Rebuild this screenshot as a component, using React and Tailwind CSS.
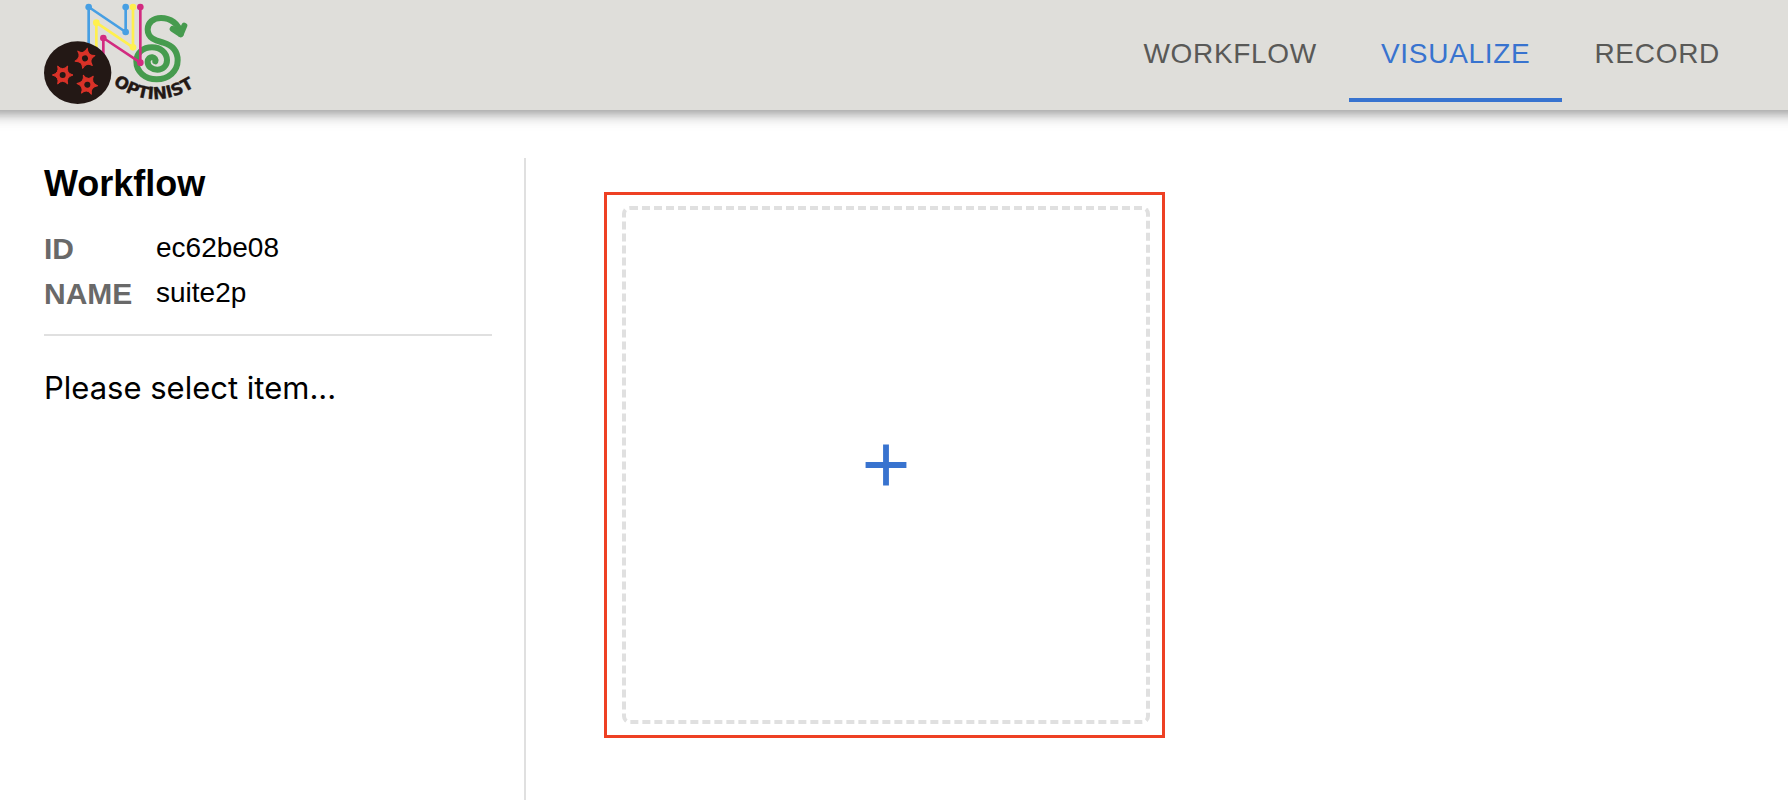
import React from "react";

const GEAR =
  "M31 0 Q9 6 15 27 Q0 11 -15 27 Q-9 6 -31 0 Q-9 -6 -15 -27 Q0 -11 15 -27 Q9 -6 31 0 Z";

function Gear({ x, y, angle }) {
  return (
    <g transform={`translate(${x} ${y}) rotate(${angle})`}>
      <circle r="19" fill="#d93228" />
      <path d={GEAR} fill="#d93228" stroke="#d93228" strokeWidth="3" strokeLinejoin="round" />
      <circle r="9" fill="#231815" />
    </g>
  );
}

function Logo() {
  return (
    <svg viewBox="42 0 456 330" className="h-[110px] w-[152px]" role="img" aria-label="OptiNiSt">
      <g fill="none" stroke="#469b4e" strokeWidth="18" strokeLinecap="round" strokeLinejoin="round">
        <path d="M452 102 C447 70 420 54 393 54 C370 54 353 68 353 88 C353 116 378 122 400 128 C430 137 443 156 443 181 C443 214 415 238 380 238 C345 238 319 215 319 184 C319 158 340 142 366 142 C392 142 411 158 411 181 C411 198 398 209 382 209 C365 209 353 199 353 186 C353 176 360 171 367 172 C374 173 378 179 376 184" />
        <path d="M428 87 L452 103 L463 77" />
      </g>
      <g fill="none" strokeWidth="8" strokeLinejoin="round">
        <path d="M176 145 V21 L287 96 V21" stroke="#479fe3" />
        <path d="M199 150 V68 L309 142 V21" stroke="#fff04f" />
        <path d="M220 170 V114 L331 188 V21" stroke="#d22b80" />
      </g>
      <g fill="#479fe3">
        <circle cx="176" cy="21" r="10" />
        <circle cx="287" cy="21" r="10" />
        <circle cx="287" cy="96" r="10" />
      </g>
      <g fill="#fff04f">
        <circle cx="199" cy="68" r="10" />
        <circle cx="309" cy="21" r="10" />
        <circle cx="309" cy="142" r="10" />
      </g>
      <g fill="#d22b80">
        <circle cx="220" cy="114" r="10" />
        <circle cx="331" cy="21" r="10" />
        <circle cx="331" cy="188" r="10" />
      </g>
      <ellipse cx="143" cy="218" rx="101" ry="94" fill="#231815" />
      <Gear x={165} y={175} angle={-16} />
      <Gear x={98} y={225} angle={0} />
      <Gear x={172} y={254} angle={6} />
      <path id="logo-arc" d="M249 252 Q378 346 514 246" fill="none" />
      <text
        className="font-['DejaVu_Sans',sans-serif] text-[50px] font-bold"
        fill="#231815"
        stroke="#231815"
        strokeWidth="1"
      >
        <textPath href="#logo-arc">OPTINIST</textPath>
      </text>
    </svg>
  );
}

const TABS = ["Workflow", "Visualize", "Record"];

function Header() {
  return (
    <header className="relative -mx-5 flex items-center justify-between bg-[#dfdeda] pr-14 pl-16 shadow-[0_4px_8px_-2px_rgba(0,0,0,0.2),0_8px_10px_rgba(0,0,0,0.14),0_2px_20px_rgba(0,0,0,0.12)]">
      <Logo />
      <nav className="flex pb-0.5" role="tablist">
        {TABS.map((tab) => {
          const active = tab === "Visualize";
          return (
            <button
              key={tab}
              type="button"
              role="tab"
              aria-selected={active}
              className={
                "h-24 border-y-4 border-t-transparent px-8 text-[28px] leading-9 tracking-wide uppercase " +
                (active ? "border-b-[#3873cf] text-[#3873cf]" : "border-b-transparent text-[#595957]")
              }
            >
              {tab}
            </button>
          );
        })}
      </nav>
    </header>
  );
}

function Sidebar() {
  return (
    <aside className="w-[526px] shrink-0 border-r-2 border-[#e0e0e0] pr-8 pl-11">
      <h3 className="pt-1 text-[36px] leading-[44px] font-bold">Workflow</h3>
      <dl className="mt-5 grid grid-cols-[112px_1fr] border-b-2 border-[#e0e0e0] pb-[18px]">
        <dt className="text-[30px] leading-[45px] font-bold text-[#696969]">ID</dt>
        <dd className="text-[28px] leading-[43px]">ec62be08</dd>
        <dt className="text-[30px] leading-[45px] font-bold text-[#696969]">NAME</dt>
        <dd className="text-[28px] leading-[43px]">suite2p</dd>
      </dl>
      <p className="mt-8 font-['Inter',sans-serif] text-[31px] leading-10">Please select item...</p>
    </aside>
  );
}

export default function App() {
  return (
    <div className="flex min-h-screen flex-col overflow-x-clip bg-white font-['Liberation_Sans',Arial,sans-serif] text-black">
      <Header />
      <div className="flex flex-1 pt-12">
        <Sidebar />
        <main className="flex flex-1 items-start pt-[34px] pl-[78px]">
          <div className="border-3 border-[#ee4023] py-[11px] pr-3 pl-[15px]">
            <button
              type="button"
              aria-label="Add item"
              className="flex h-[518px] w-[528px] items-center justify-center rounded-lg border-4 border-dashed border-[#e0e0e0] text-[#3873cf]"
            >
              <svg viewBox="0 0 24 24" className="size-[70px]" fill="currentColor" aria-hidden="true">
                <path d="M19 13h-6v6h-2v-6H5v-2h6V5h2v6h6z" />
              </svg>
            </button>
          </div>
        </main>
      </div>
    </div>
  );
}
